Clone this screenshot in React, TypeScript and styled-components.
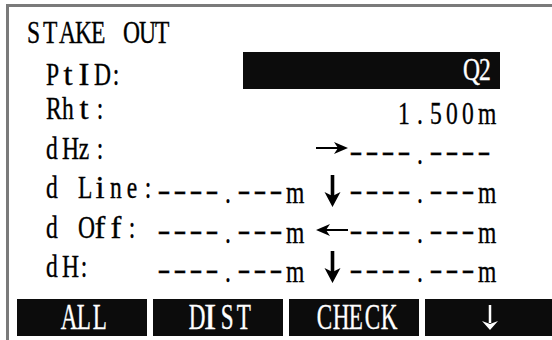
import React from 'react';
import styled, { createGlobalStyle } from 'styled-components';

const GlobalStyle = createGlobalStyle`
  html, body {
    margin: 0;
    padding: 0;
    background: #fff;
  }
  body {
    font-family: "Liberation Serif", "Times New Roman", serif;
    color: #000;
  }
`;

const Screen = styled.div`
  width: 552px;
  height: 340px;
  overflow: hidden;
  background: #fff;
  padding: 4px 0 0 6px;
  box-sizing: border-box;
`;

const Frame = styled.div`
  height: 100%;
  box-sizing: border-box;
  border-top: 3px solid #7a7a7a;
  border-left: 3px solid #7a7a7a;
  padding-top: 7px;
  display: flex;
  flex-direction: column;
`;

const Title = styled.div`
  height: 38px;
  line-height: 38px;
  padding-left: 16px;
  font-size: 31px;
  white-space: nowrap;
`;

// one LCD row: label | value | gap | arrow | value, 16px per character cell
const Row = styled.div<{ $height: number }>`
  display: grid;
  grid-template-columns: 112px 144px 16px 32px 144px;
  grid-template-rows: ${props => props.$height}px;
  line-height: ${props => props.$height}px;
  padding-left: 35px;
  font-size: 31px;
`;

const Glyph = styled.span<{ $squeeze: number; $lift: number }>`
  display: inline-block;
  width: 16px;
  text-align: center;
  white-space: pre;
  -webkit-text-stroke: 0.35px currentColor;
  transform: translateY(${props => -props.$lift}px) scaleX(${props => props.$squeeze});
`;

const Line = styled.span<{ $drop?: number; $align?: 'left' | 'right'; $span?: string }>`
  display: block;
  white-space: nowrap;
  text-align: ${props => props.$align ?? 'left'};
  grid-column: ${props => props.$span ?? 'auto'};
  transform: translateY(${props => props.$drop ?? 0}px);
`;

const Field = styled.div`
  grid-column: 2 / -1;
  justify-self: end;
  align-self: start;
  width: 257px;
  height: 37px;
  margin-right: -8px;
  padding-right: 7px;
  box-sizing: border-box;
  background: #0c0c0c;
  color: #fff;
  line-height: 35px;
  text-align: right;
  white-space: nowrap;
`;

const ArrowSlot = styled.div<{ $drop?: number }>`
  grid-column: 4;
  display: flex;
  align-items: center;
  justify-content: center;
  transform: translateY(${props => props.$drop ?? 0}px);
`;

const Keys = styled.div`
  display: flex;
  gap: 6px;
  margin-top: 12.5px;
  padding-left: 8px;
`;

const Key = styled.div`
  flex: 0 0 130px;
  height: 37px;
  background: #0c0c0c;
  color: #fff;
  display: flex;
  align-items: center;
  justify-content: center;
  font-size: 35px;
  line-height: 35px;
  white-space: nowrap;
`;

// narrow latin letters fill more of their cell on the display
const NARROW = new Set(['t', 'I', 'i', 'l', 'f', 'r']);

const Mono = ({ text, squeeze = 0.76 }: { text: string; squeeze?: number }) => (
  <>
    {Array.from(text).map((ch, i) => (
      <Glyph
        key={i}
        $squeeze={ch === '-' ? 1.25 : NARROW.has(ch) ? 1.05 : squeeze}
        $lift={ch === '-' ? 3 : 0}
      >
        {ch}
      </Glyph>
    ))}
  </>
);

const RightArrow = () => (
  <svg width="32" height="16" viewBox="0 0 32 16">
    <line x1="0" y1="8" x2="26" y2="8" stroke="#000" strokeWidth="2" />
    <path d="M18 2 L32 8 L18 14 L22 8 Z" fill="#000" />
  </svg>
);

const LeftArrow = () => (
  <svg width="32" height="16" viewBox="0 0 32 16">
    <line x1="6" y1="8" x2="32" y2="8" stroke="#000" strokeWidth="2" />
    <path d="M14 2 L0 8 L14 14 L10 8 Z" fill="#000" />
  </svg>
);

const DownArrow = () => (
  <svg width="17" height="32" viewBox="0 0 17 32">
    <rect x="6.7" y="0" width="3.6" height="23" fill="#000" />
    <path d="M0.5 17 L8.5 32 L16.5 17 L8.5 21 Z" fill="#000" />
  </svg>
);

const KeyDownArrow = () => (
  <svg width="18" height="26" viewBox="0 0 18 26">
    <line x1="9" y1="0" x2="9" y2="18" stroke="#fff" strokeWidth="2.5" />
    <path d="M1 16 L9 25 L17 16 L9 19 Z" fill="#fff" />
  </svg>
);

type Reading = {
  label: string;
  left?: string;
  arrow?: 'right' | 'left' | 'down';
  right: string;
  arrowDrop: number;
};

const readings: Reading[] = [
  { label: 'dHz:', arrow: 'right', right: '----.----', arrowDrop: 0 },
  { label: 'd Line:', left: '----.---m', arrow: 'down', right: '----.---m', arrowDrop: 3 },
  { label: 'd Off:', left: '----.---m', arrow: 'left', right: '----.---m', arrowDrop: 3 },
  { label: 'dH:', left: '----.---m', arrow: 'down', right: '----.---m', arrowDrop: 0 },
];

const VALUE_DROP = 5;

const App = () => (
  <>
    <GlobalStyle />
    <Screen>
      <Frame>
        <Title>
          <Mono text="STAKE OUT" />
        </Title>

        <Row $height={37}>
          <Line $drop={4}>
            <Mono text="PtID:" />
          </Line>
          <Field>
            <Mono text="Q2" />
          </Field>
        </Row>

        <Row $height={39.5}>
          <Line>
            <Mono text="Rht:" />
          </Line>
          <Line $span="2 / -1" $align="right" $drop={VALUE_DROP}>
            <Mono text="1.500m" />
          </Line>
        </Row>

        {readings.map(r => (
          <Row key={r.label} $height={39.5}>
            <Line>
              <Mono text={r.label} />
            </Line>
            {r.left && (
              <Line $span="2" $drop={VALUE_DROP}>
                <Mono text={r.left} />
              </Line>
            )}
            <ArrowSlot $drop={r.arrowDrop}>
              {r.arrow === 'right' && <RightArrow />}
              {r.arrow === 'left' && <LeftArrow />}
              {r.arrow === 'down' && <DownArrow />}
            </ArrowSlot>
            <Line $span="5" $drop={VALUE_DROP}>
              <Mono text={r.right} />
            </Line>
          </Row>
        ))}

        <Keys>
          <Key><Mono text="ALL" squeeze={0.66} /></Key>
          <Key><Mono text="DIST" squeeze={0.66} /></Key>
          <Key><Mono text="CHECK" squeeze={0.66} /></Key>
          <Key><KeyDownArrow /></Key>
        </Keys>
      </Frame>
    </Screen>
  </>
);

export default App;
